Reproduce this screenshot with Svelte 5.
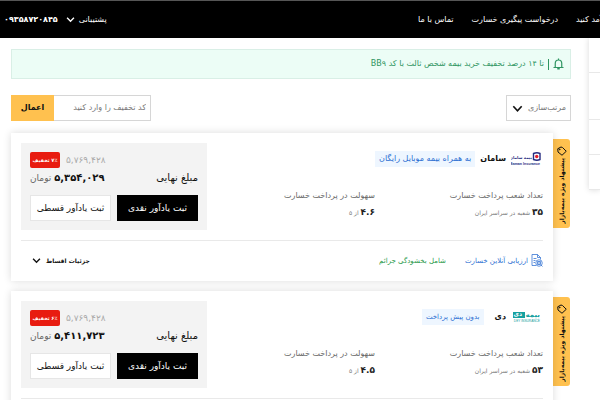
<script>
  const offers = [
    {
      id: 'saman',
      name: 'سامان',
      tag: 'به همراه بیمه موبایل رایگان',
      small: false,
      branches: '۳۵',
      score: '۴.۶',
      off: '۷٪ تخفیف',
      old: '۵,۷۶۹,۴۲۸',
      price: '۵,۳۵۴,۰۲۹'
    },
    {
      id: 'dey',
      name: 'دی',
      tag: 'بدون پیش پرداخت',
      small: true,
      branches: '۵۳',
      score: '۴.۵',
      off: '۶٪ تخفیف',
      old: '۵,۷۶۹,۴۲۸',
      price: '۵,۴۱۱,۷۲۳'
    }
  ];
  let code = $state('');
</script>

{#snippet chevron(size)}
  <svg class="chevron" width={size} height={size} viewBox="0 0 10 10" aria-hidden="true">
    <path d="M1.2 3 5 7 8.800 3" fill="none" stroke="currentColor" stroke-width="1.500" />
  </svg>
{/snippet}

<div class="page" dir="rtl">
  <header>
    <nav>
      <a class="cut" href="#income">درآمد کنید</a>
      <a href="#claim">درخواست پیگیری خسارت</a>
      <a href="#contact">تماس با ما</a>
    </nav>
    <div class="account">
      <button class="menu">پشتیبانی {@render chevron(9)}</button>
      <a class="phone" href="tel:09358720845">۰۹۳۵۸۷۲۰۸۴۵</a>
    </div>
  </header>

  <div class="body">
    <aside>
      <div class="a"></div>
      <div class="b"></div>
      <div class="c"></div>
      <div class="d"></div>
    </aside>

    <main>
      <div class="notice">
        <svg width="11" height="12" viewBox="0 0 22 24" fill="none" stroke="currentColor" stroke-width="2.400" aria-hidden="true">
          <path d="M1 19h20M4.500 18.500V11c0-4 2.500-7 6.500-7s6.500 3 6.500 7v7.500M11 4V1" />
          <path d="M8.500 21.500h5" stroke-width="3" />
        </svg>
        <span class="bar"></span>
        <span>تا ۱۴ درصد تخفیف خرید بیمه شخص ثالث با کد BB۹</span>
      </div>

      <div class="tools">
        <div class="sort">
          <select aria-label="مرتب‌سازی">
            <option>مرتب‌سازی</option>
          </select>
          {@render chevron(11)}
        </div>
        <form onsubmit={(e) => e.preventDefault()}>
          <input type="text" aria-label="کد تخفیف" placeholder="کد تخفیف را وارد کنید" bind:value={code} />
          <button>اعمال</button>
        </form>
      </div>

      {#each offers as o (o.id)}
        <section class="offer">
          <div class="ribbon">
            <svg width="10" height="10" viewBox="0 0 20 20" fill="none" stroke="currentColor" stroke-width="2" aria-hidden="true">
              <path d="M8 2 1.500 5.500 2 12l8 6.500 8.500-8L11 3z" stroke-linejoin="round" />
              <circle cx="5.500" cy="7" r=".8" fill="currentColor" />
            </svg>
            <span>پیشنهاد ویژه بیمه‌بازار</span>
          </div>
          <article>
            <div class="top">
              <div class="info">
                <div class="brand">
                  {#if o.id === 'saman'}
                    <svg class="logo" width="30" height="14" viewBox="0 0 30 14" role="img" aria-label="Saman Insurance">
                      <path d="M22.500 1.500q3.500-1.500 6.500 0v6q-3 1.500-6.500 0z" fill="#fff" stroke="#252c80" stroke-width="1.400" />
                      <circle cx="25.700" cy="4.500" r="1.700" fill="#e3202b" />
                      <text x="21" y="6.500" font-size="4" font-weight="700" fill="#252c80">بیمه سامان</text>
                      <text class="latin" x="29" y="12.500" font-size="3.600" font-weight="700" fill="#252c80">Saman Insurance</text>
                    </svg>
                  {:else}
                    <svg class="logo" width="30" height="14" viewBox="0 0 30 14" role="img" aria-label="Dey Insurance">
                      <rect x="2" y="2" width="12" height="6" fill="#15a0a0" />
                      <text x="11" y="6.300" font-size="6" font-weight="700" fill="#fff">دی</text>
                      <text x="29" y="6.500" font-size="7" font-weight="700" fill="#15a0a0">بیمه</text>
                      <text class="latin" x="29" y="12" font-size="3.200" fill="#15a0a0">DEY INSURANCE</text>
                    </svg>
                  {/if}
                  <h2>{o.name}</h2>
                  <span class="tag" class:small={o.small}>{o.tag}</span>
                </div>
                <dl>
                  <div>
                    <dt>تعداد شعب پرداخت خسارت</dt>
                    <dd><b>{o.branches}</b> شعبه در سراسر ایران</dd>
                  </div>
                  <div>
                    <dt>سهولت در پرداخت خسارت</dt>
                    <dd><b>{o.score}</b> از ۵</dd>
                  </div>
                </dl>
              </div>

              <div class="price">
                <div class="before">
                  <del>{o.old}</del>
                  <span class="off">{o.off}</span>
                </div>
                <div class="final">
                  <span>مبلغ نهایی</span>
                  <span class="sum"><b>{o.price}</b> تومان</span>
                </div>
                <div class="actions">
                  <button class="cash">ثبت یادآور نقدی</button>
                  <button>ثبت یادآور قسطی</button>
                </div>
              </div>
            </div>

            <div class="foot">
              <a href="#assess">
                <svg width="12" height="13" viewBox="0 0 24 26" fill="none" stroke="currentColor" stroke-width="1.500" aria-hidden="true">
                  <path d="M10 23H2V1h11l6 6v4M13 1v6h6M5 9h6M5 13h4M5 17h3" />
                  <circle cx="16" cy="18" r="6.500" />
                  <path d="M13 15h6v6h-6zM16 15v6M20 22l3 3" />
                </svg>
                ارزیابی آنلاین خسارت
              </a>
              <span class="perk">شامل بخشودگی جرائم</span>
              <button>جزئیات اقساط {@render chevron(9)}</button>
            </div>
          </article>
        </section>
      {/each}
    </main>
  </div>
</div>

<style>
  :global(body) {
    overflow: hidden;
    background: #fff;
  }
  .page {
    height: 100vh;
    overflow: hidden;
    font-family: 'DejaVu Sans', 'Noto Sans', sans-serif;
    font-size: 8px;
    line-height: 12px;
    color: #111;
    white-space: nowrap;
  }
  button,
  input,
  select {
    margin: 0;
    padding: 0;
    border: 0;
    border-radius: 0;
    background: none;
    font: inherit;
    color: inherit;
  }
  a {
    color: inherit;
    text-decoration: none;
  }
  svg {
    flex: none;
    display: block;
  }
  header {
    display: flex;
    justify-content: space-between;
    align-items: center;
    height: 37px;
    border-top: 1px solid #555;
    background: #000;
    color: #fff;
    padding-left: 4px;
  }
  nav {
    display: flex;
    gap: 18px;
  }
  .cut {
    display: flex;
    justify-content: flex-end;
    width: 24px;
  }
  .account,
  .menu {
    display: flex;
    align-items: center;
  }
  .account {
    gap: 8px;
  }
  .menu {
    gap: 4px;
  }
  .phone {
    font-weight: 700;
  }
  .body {
    display: flex;
    align-items: flex-start;
  }
  aside {
    flex: none;
    width: 11px;
    box-shadow: 0 0 6px rgba(0, 0, 0, 0.15);
  }
  aside div {
    border-bottom: 1px solid #e8e8e8;
  }
  .a {
    height: 34px;
  }
  .b {
    height: 46px;
  }
  .c,
  .d {
    height: 34px;
  }
  main {
    flex: 1;
    min-width: 0;
    padding: 11px 18px 0 11px;
  }
  .notice {
    display: flex;
    align-items: center;
    gap: 4px;
    height: 28px;
    padding: 0 6px;
    border: 1px solid #d9efe6;
    background: #ecfdf6;
    color: #2f9562;
  }
  .bar {
    width: 1px;
    height: 11px;
    background: #2f9562;
  }
  .tools {
    display: flex;
    justify-content: space-between;
    margin: 16px 0 12px;
  }
  .sort {
    display: flex;
    align-items: center;
    position: relative;
    box-sizing: border-box;
    width: 65px;
    height: 26px;
    border: 1px solid #d6d6d6;
  }
  select {
    appearance: none;
    width: 100%;
    height: 100%;
    padding-right: 4px;
    color: #777;
  }
  .sort .chevron {
    position: absolute;
    left: 5px;
    pointer-events: none;
  }
  form {
    display: flex;
    height: 26px;
  }
  input {
    box-sizing: border-box;
    width: 97px;
    padding: 0 4px;
    border: 1px solid #d6d6d6;
    border-left: 0;
  }
  input::placeholder {
    color: #777;
    opacity: 1;
  }
  form button {
    width: 43px;
    background: #ffc14f;
    font-weight: 700;
  }
  .offer {
    display: flex;
    align-items: flex-start;
    margin: 0 0 10px;
  }
  .ribbon {
    display: flex;
    flex-direction: column;
    align-items: center;
    gap: 2px;
    box-sizing: border-box;
    width: 17px;
    height: 89px;
    margin: 6px 1px 0 0;
    padding-top: 7px;
    border-radius: 0 3px 3px 0;
    background: #ffc14f;
    font-size: 6px;
    font-weight: 700;
  }
  .ribbon span {
    writing-mode: vertical-rl;
    transform: rotate(180deg);
  }
  article {
    flex: 1;
    min-width: 0;
    box-sizing: border-box;
    padding: 10px 10px 6px;
    background: #fff;
    box-shadow: 0 0 8px rgba(0, 0, 0, 0.14);
  }
  .top {
    display: flex;
    justify-content: space-between;
    padding-bottom: 10px;
    border-bottom: 1px solid #e9e9e9;
  }
  .info {
    flex: 1;
  }
  .brand {
    display: flex;
    align-items: center;
    height: 16px;
    margin-top: 8px;
  }
  .logo {
    margin: 0 2px 0 5px;
  }
  .logo .latin {
    direction: ltr;
    text-anchor: end;
    font-family: 'Liberation Sans', sans-serif;
  }
  h2 {
    margin: 0 0 0 5px;
    font-size: 8px;
  }
  .tag {
    padding: 2px 4px;
    background: #eef6ff;
    color: #2d6fd2;
  }
  .small {
    margin-right: 6px;
    font-size: 7px;
  }
  dl {
    display: flex;
    margin: 22px 0 0;
  }
  dl div {
    width: 50%;
  }
  dt {
    color: #666;
    line-height: 14px;
  }
  dd {
    margin: 2px 0 0;
    font-size: 6px;
    line-height: 14px;
    color: #777;
  }
  dd b {
    font-size: 9px;
    color: #222;
  }
  .price {
    box-sizing: border-box;
    width: 186px;
    padding: 9px;
    background: #f3f3f3;
  }
  .before {
    display: flex;
    justify-content: flex-end;
    align-items: center;
    gap: 6px;
    height: 16px;
    font-size: 9px;
  }
  del {
    color: #aaa;
    text-decoration: none;
  }
  .off {
    width: 30px;
    border-radius: 2px;
    background: #e81c10;
    color: #fff;
    font-size: 5px;
    line-height: 16px;
    font-weight: 700;
    text-align: center;
  }
  .final {
    display: flex;
    justify-content: space-between;
    height: 16px;
    margin: 2px 0 9px;
    font-size: 10px;
    line-height: 16px;
  }
  .sum {
    font-size: 9px;
    color: #666;
  }
  .sum b {
    font-size: 10px;
    color: #111;
  }
  .actions {
    display: flex;
    gap: 6px;
  }
  .actions button {
    flex: 1;
    height: 26px;
    border: 1px solid #e6e6e6;
    background: #fff;
    font-size: 9px;
  }
  .actions .cash {
    border-color: #000;
    background: #000;
    color: #fff;
  }
  .foot {
    display: flex;
    align-items: center;
    height: 29px;
    padding-top: 5px;
    font-size: 7px;
  }
  .foot a,
  .foot button {
    display: flex;
    align-items: center;
    gap: 3px;
  }
  .foot a {
    color: #2d6fd2;
  }
  .perk {
    margin-right: 19px;
    color: #28994a;
  }
  .foot button {
    gap: 5px;
    margin: 0 auto 0 11px;
    font-size: 6px;
    font-weight: 700;
  }
</style>
